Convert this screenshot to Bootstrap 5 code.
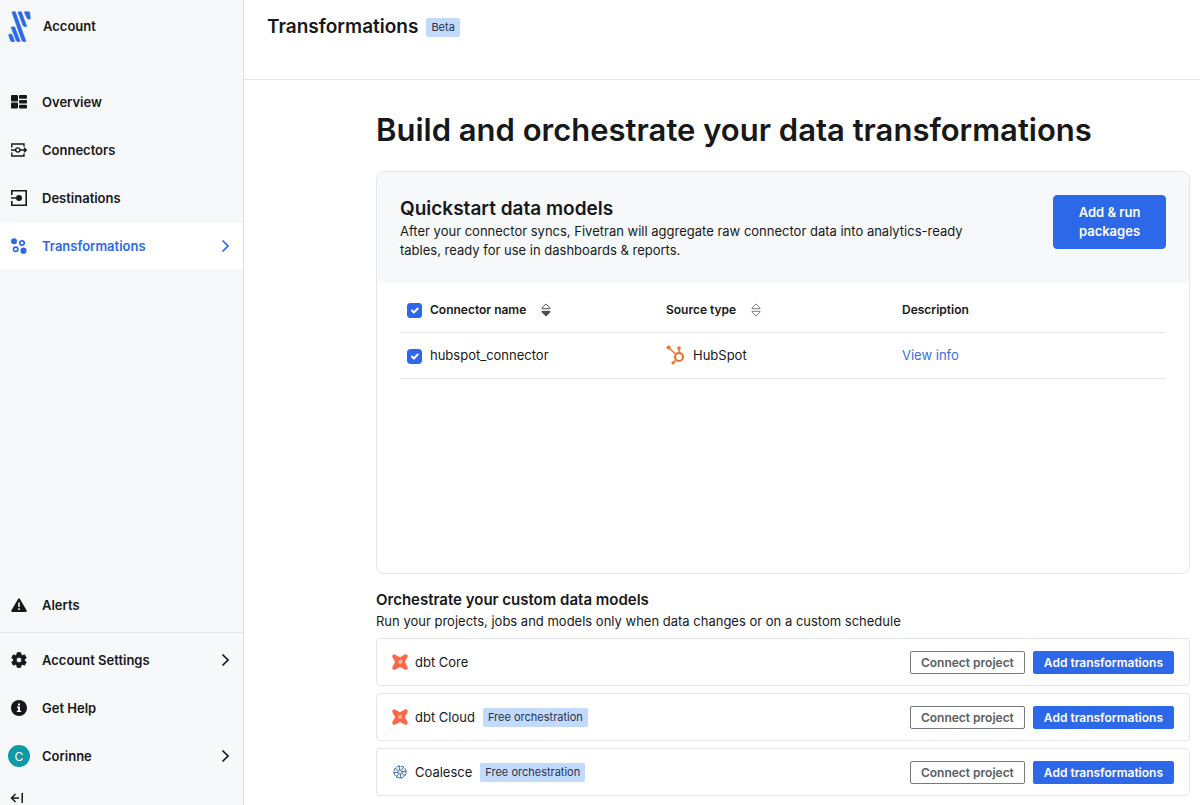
<!DOCTYPE html>
<html lang="en">
<head>
<meta charset="utf-8">
<meta name="viewport" content="width=device-width, initial-scale=1">
<title>Transformations</title>
<link href="https://cdn.jsdelivr.net/npm/bootstrap@5.3.0/dist/css/bootstrap.min.css" rel="stylesheet">
<style>
  :root { --ink: #17181a; --blue: #2d68e8; --line: #e3e5e8; --soft: #f6f8fa; --tag: #c3daff; }
  body { font-family: Inter, "Liberation Sans", sans-serif; font-size: 13px; line-height: 19px; color: var(--ink); }
  .sidebar { flex: 0 0 244px; background: var(--soft); border-right: 1px solid #dfe1e4; position: sticky; top: 0; }
  .side-link { display: flex; align-items: center; width: 100%; height: 46px; padding: 0 12px 0 8px; border: 0; background: transparent; color: var(--ink); font-weight: 600; text-decoration: none; text-align: left; }
  .side-link.active { background: #fff; color: var(--blue); }
  .side-link.brand { height: 53px; margin-bottom: 26px; }
  .side-list { display: flex; flex-direction: column; gap: 2px; }
  .side-icon { flex: 0 0 22px; height: 22px; margin-right: 12px; display: flex; align-items: center; justify-content: center; }
  .side-foot { border-top: 1px solid var(--line); padding-top: 4px; }
  .avatar { background: #0c9ba6; color: #fff; border-radius: 50%; font-size: 12px; font-weight: 400; }
  .side-link.collapse-btn { height: 26px; padding: 12px 0 0 10px; }
  .page-head { height: 80px; padding: 14px 23px; border-bottom: 1px solid var(--line); }
  .page-head h1 { font-size: 19px; line-height: 26px; font-weight: 600; }
  .tag { background: var(--tag); font-size: 11px; line-height: 19px; padding: 0 5px; border-radius: 2px; color: #2a3342; }
  .content { padding: 32px 10px 8px 132px; }
  .content > h2 { font-size: 31px; line-height: 36px; font-weight: 600; margin-bottom: 23px; }
  .panel { border: 1px solid var(--line); border-radius: 8px; overflow: hidden; min-height: 403px; }
  .panel-top { background: var(--soft); height: 111px; padding: 23px; }
  .panel-top h3 { font-size: 19px; line-height: 27px; font-weight: 600; margin: 0; }
  .panel-top p { max-width: 590px; }
  .btn { --bs-btn-font-weight: 600; --bs-btn-font-size: 12px; --bs-btn-line-height: 19px; --bs-btn-border-radius: 2px; --bs-btn-padding-x: 10px; --bs-btn-padding-y: 1px; }
  .btn-primary { --bs-btn-bg: var(--blue); --bs-btn-border-color: var(--blue); --bs-btn-hover-bg: #2459cc; }
  .btn-outline-secondary { --bs-btn-color: #5b5d61; --bs-btn-border-color: #777a7e; }
  .run-btn { --bs-btn-font-size: 13px; --bs-btn-border-radius: 4px; width: 113px; height: 54px; }
  .panel-body { padding: 0 23px; }
  .model-table { table-layout: fixed; --bs-table-bg: transparent; color: var(--ink); }
  .model-table > :not(caption) > * > * { padding: 0; height: 46px; vertical-align: middle; border-color: var(--line); }
  .model-table thead > tr > th { height: 49px; padding-top: 4px; font-size: 12px; font-weight: 600; }
  .model-table th svg { margin-left: 12px; }
  .col-check { width: 30px; } .col-main { width: 236px; }
  .form-check-input { width: 15px; height: 15px; border-radius: 3px; margin: 3px 0 0 7px; display: block; }
  .form-check-input:checked { background-color: var(--blue); border-color: var(--blue); }
  a.info { color: #3a6fdc; text-decoration: none; }
  .orch h3 { font-size: 15px; line-height: 22px; font-weight: 600; margin: 15px 0 1px; }
  .orch-row { height: 48px; border: 1px solid var(--line); border-radius: 4px; padding: 0 15px; }
  .orch-row svg { margin-right: 7px; }
  .orch-list { gap: 7px; margin-top: 7px; }
</style>
</head>
<body>
<svg class="d-none" aria-hidden="true">
  <symbol id="chev" viewBox="0 0 10 14"><path d="M1.500 1.500 7 7l-5.500 5.500" fill="none" stroke="currentColor" stroke-width="1.700"/></symbol>
  <symbol id="dbt" viewBox="0 0 16 16"><path fill="#ff694a" d="M3 .4 7.900 3.200 13.200.3C14.700-.1 16.100 1.300 15.700 2.700L12.900 7.900 15.700 13.200C16.100 14.700 14.700 16.100 13.200 15.700L8 12.900 2.800 15.700C1.300 16.100-.1 14.700.3 13.200L3.100 8 .3 2.900C-.1 1.300 1.400-.1 3 .4z"/><path fill="none" stroke="#fff" stroke-width=".9" d="M9.500 6.200 8.300 6.800a1.200 1.200 0 1 0 .9 1.400z"/></symbol>
</svg>
<div class="d-flex min-vh-100">
  <aside class="sidebar vh-100 d-flex flex-column">
    <div class="side-link brand">
      <span class="side-icon"><svg class="flex-shrink-0" width="23" height="32" viewBox="0 0 23 32" fill="#2d68e8" stroke="#2d68e8" stroke-width=".6"><path d="M4.300.8H7.300L18 30.500h-3L14 29.800 4 1.300zM10.300.8h3L18.800 15.500h-2.600l-1-.7L10 1.300zM16.600.8h4Q21.500.8 21.700 1.600L22.300 8H20l-.9-.6L16.400 1.300zM3.500 15.900H6.700L12.200 30.500H9.200L8.400 29.800 3.200 16.500zM1 23.300H3.800L6.700 30.500H3.200L2.500 29.800.6 23.800z"/></svg></span>Account
    </div>
    <nav class="side-list">
      <a class="side-link" href="#"><span class="side-icon"><svg width="16" height="14" viewBox="0 0 16 14" fill="currentColor"><rect width="7" height="6.500" rx="1"/><rect y="7.500" width="7" height="6" rx="1"/><rect x="8" width="8" height="3.700" rx="1"/><rect x="8" y="4.900" width="8" height="3.700" rx="1"/><rect x="8" y="9.800" width="8" height="3.700" rx="1"/></svg></span>Overview</a>
      <a class="side-link" href="#"><span class="side-icon"><svg width="16" height="14" viewBox="0 0 16 14" fill="none" stroke="currentColor" stroke-width="1.400"><path d="M.8 4.600V1H13v2.600M.8 9.400V13H13v-2.600M0 7h4.600M9 7h6M13 4.700 15.300 7 13 9.300"/><circle cx="6.800" cy="7" r="2.100"/></svg></span>Connectors</a>
      <a class="side-link" href="#"><span class="side-icon"><svg width="16" height="16" viewBox="0 0 16 16" fill="none" stroke="currentColor" stroke-width="1.600"><path d="M.8 5V.8h14.400v14.400H.8V11M0 8h5"/><circle cx="8" cy="8" r="3" fill="currentColor" stroke="none"/></svg></span>Destinations</a>
      <a class="side-link active" href="#" aria-current="page"><span class="side-icon"><svg width="16" height="16" viewBox="0 0 16 16" fill="currentColor"><circle cx="3" cy="3.300" r="3"/><circle cx="12.500" cy="12.700" r="3.100"/><g fill="none" stroke="currentColor" stroke-width="1.700"><circle cx="11" cy="5" r="2.200"/><circle cx="4.700" cy="11.300" r="2.200"/></g></svg></span><span class="flex-grow-1">Transformations</span><svg width="10" height="14"><use href="#chev"/></svg></a>
    </nav>
    <div class="mt-auto">
      <a class="side-link mb-1" href="#"><span class="side-icon"><svg width="16" height="14" viewBox="0 0 16 14"><path fill="currentColor" d="M7.200.7Q8-.4 8.800.7L15.700 12.400Q16 14 14.600 14H1.400Q0 14 .3 12.400z"/><path stroke="#f6f8fa" stroke-width="1.600" d="M8 4.500v4.500M8 10.300v1.700"/></svg></span>Alerts</a>
      <div class="side-foot side-list">
        <a class="side-link" href="#"><span class="side-icon"><svg width="18" height="18" viewBox="0 0 24 24" fill="currentColor"><path d="M19.400 13c.1-.6.100-1.400 0-2l2.100-1.600c.2-.2.300-.4.100-.7l-2-3.400c-.1-.3-.4-.3-.6-.2l-2.500 1c-.5-.4-1.100-.7-1.700-1l-.4-2.600c0-.3-.2-.5-.5-.5h-4c-.2 0-.4.200-.5.500l-.3 2.600c-.6.300-1.200.6-1.700 1l-2.500-1c-.2-.1-.5 0-.6.200l-2 3.400c-.1.300-.1.500.1.700L4.600 11c-.1.600-.1 1.400 0 2l-2.200 1.600c-.2.200-.2.400-.1.700l2 3.400c.1.300.4.300.6.200l2.500-1c.5.400 1.100.7 1.700 1l.3 2.600c.1.300.3.500.5.500h4c.3 0 .5-.2.500-.5l.4-2.600c.6-.3 1.200-.6 1.700-1l2.500 1c.2.100.5 0 .6-.2l2-3.400c.1-.3.100-.5-.1-.7zM12 15.600a3.600 3.600 0 1 1 0-7.200 3.600 3.600 0 0 1 0 7.200z" stroke="currentColor"/></svg></span><span class="flex-grow-1">Account Settings</span><svg width="10" height="14"><use href="#chev"/></svg></a>
        <a class="side-link" href="#"><span class="side-icon"><svg width="16" height="16" viewBox="0 0 16 16"><circle cx="8" cy="8" r="8" fill="currentColor"/><path d="M7 3.500h2v2H7zM6 6.600h3v4.100h1.200V12H5.800v-1.300H7V7.900H6z" fill="#f6f8fa"/></svg></span>Get Help</a>
        <a class="side-link" href="#"><span class="side-icon avatar">C</span><span class="flex-grow-1">Corinne</span><svg width="10" height="14"><use href="#chev"/></svg></a>
      </div>
      <button type="button" class="side-link collapse-btn" aria-label="Collapse sidebar"><svg width="14" height="12" viewBox="0 0 14 12" fill="none" stroke="currentColor" stroke-width="1.500"><path d="M9 6H1.800M5.500 2 1.500 6l4 4M12.200 1v10"/></svg></button>
    </div>
  </aside>
  <main class="flex-grow-1">
    <header class="page-head d-flex align-items-start">
      <h1 class="m-0">Transformations</h1><span class="tag ms-2 mt-1">Beta</span>
    </header>
    <div class="content">
      <h2>Build and orchestrate your data transformations</h2>
      <section class="panel">
        <div class="panel-top d-flex justify-content-between align-items-start">
          <div><h3>Quickstart data models</h3><p class="m-0">After your connector syncs, Fivetran will aggregate raw connector data into analytics-ready tables, ready for use in dashboards &amp; reports.</p></div>
          <button type="button" class="btn btn-primary run-btn">Add &amp; run packages</button>
        </div>
        <div class="panel-body">
          <table class="table model-table mb-0">
            <colgroup><col class="col-check"><col class="col-main"><col class="col-main"><col></colgroup>
            <thead><tr>
              <th><input class="form-check-input" type="checkbox" checked aria-label="Select all connectors"></th>
              <th scope="col">Connector name <svg width="10" height="14" viewBox="0 0 10 14" fill="none" stroke="#4b4d50"><path stroke-linejoin="round" d="M1 5.700V4.900L5 .9l4 4v.8z"/><path fill="#4b4d50" stroke-linejoin="round" d="M1 8.300h8v.8l-4 4-4-4z"/></svg></th>
              <th scope="col">Source type <svg width="10" height="14" viewBox="0 0 10 14" fill="none" stroke="#77797c"><path stroke-linejoin="round" d="M1 5.700V4.900L5 .9l4 4v.8zM1 8.300h8v.8l-4 4-4-4z"/></svg></th>
              <th scope="col">Description</th>
            </tr></thead>
            <tbody><tr>
              <td><input class="form-check-input" type="checkbox" checked id="c1"></td>
              <td><label for="c1">hubspot_connector</label></td>
              <td><div class="d-flex align-items-center"><svg class="me-2" width="19" height="20" viewBox="0 0 19 20" fill="#f0732c"><g stroke="#f0732c" fill="none"><circle cx="13" cy="12" r="4" stroke-width="2.200"/><path stroke-width="1.600" d="M13 8V3M10 9.500 3 3M10.300 14.800 7 18"/></g><circle cx="2.600" cy="2.500" r="2"/><circle cx="13" cy="3" r="1.800"/><circle cx="7" cy="17.800" r="1.600"/></svg>HubSpot</div></td>
              <td><a class="info" href="#">View info</a></td>
            </tr></tbody>
          </table>
        </div>
      </section>
      <section class="orch">
        <h3>Orchestrate your custom data models</h3>
        <p class="m-0">Run your projects, jobs and models only when data changes or on a custom schedule</p>
        <div class="orch-list d-flex flex-column">
          <div class="orch-row d-flex align-items-center"><svg width="16" height="16"><use href="#dbt"/></svg><span class="me-auto">dbt Core</span><div class="d-flex gap-2"><button type="button" class="btn btn-outline-secondary">Connect project</button><button type="button" class="btn btn-primary">Add transformations</button></div></div>
          <div class="orch-row d-flex align-items-center"><svg width="16" height="16"><use href="#dbt"/></svg><span>dbt Cloud</span><span class="tag ms-2 me-auto">Free orchestration</span><div class="d-flex gap-2"><button type="button" class="btn btn-outline-secondary">Connect project</button><button type="button" class="btn btn-primary">Add transformations</button></div></div>
          <div class="orch-row d-flex align-items-center"><svg width="16" height="16" viewBox="-8 -8 16 16" fill="none" stroke="#3c6ca8"><circle r="6" stroke-width="1" stroke-dasharray="3.700 1"/><g id="vane"><path d="M0-1.500Q3.500-2.500 3.700-5.500M0 1.500Q-3.500 2.500-3.700 5.500M1.500 0Q2.500 3.500 5.500 3.700M-1.500 0Q-2.500-3.500-5.500-3.700"/></g><use href="#vane" transform="rotate(45)"/></svg><span>Coalesce</span><span class="tag ms-2 me-auto">Free orchestration</span><div class="d-flex gap-2"><button type="button" class="btn btn-outline-secondary">Connect project</button><button type="button" class="btn btn-primary">Add transformations</button></div></div>
        </div>
      </section>
    </div>
  </main>
</div>
<script src="https://cdn.jsdelivr.net/npm/bootstrap@5.3.0/dist/js/bootstrap.bundle.min.js"></script>
</body>
</html>
